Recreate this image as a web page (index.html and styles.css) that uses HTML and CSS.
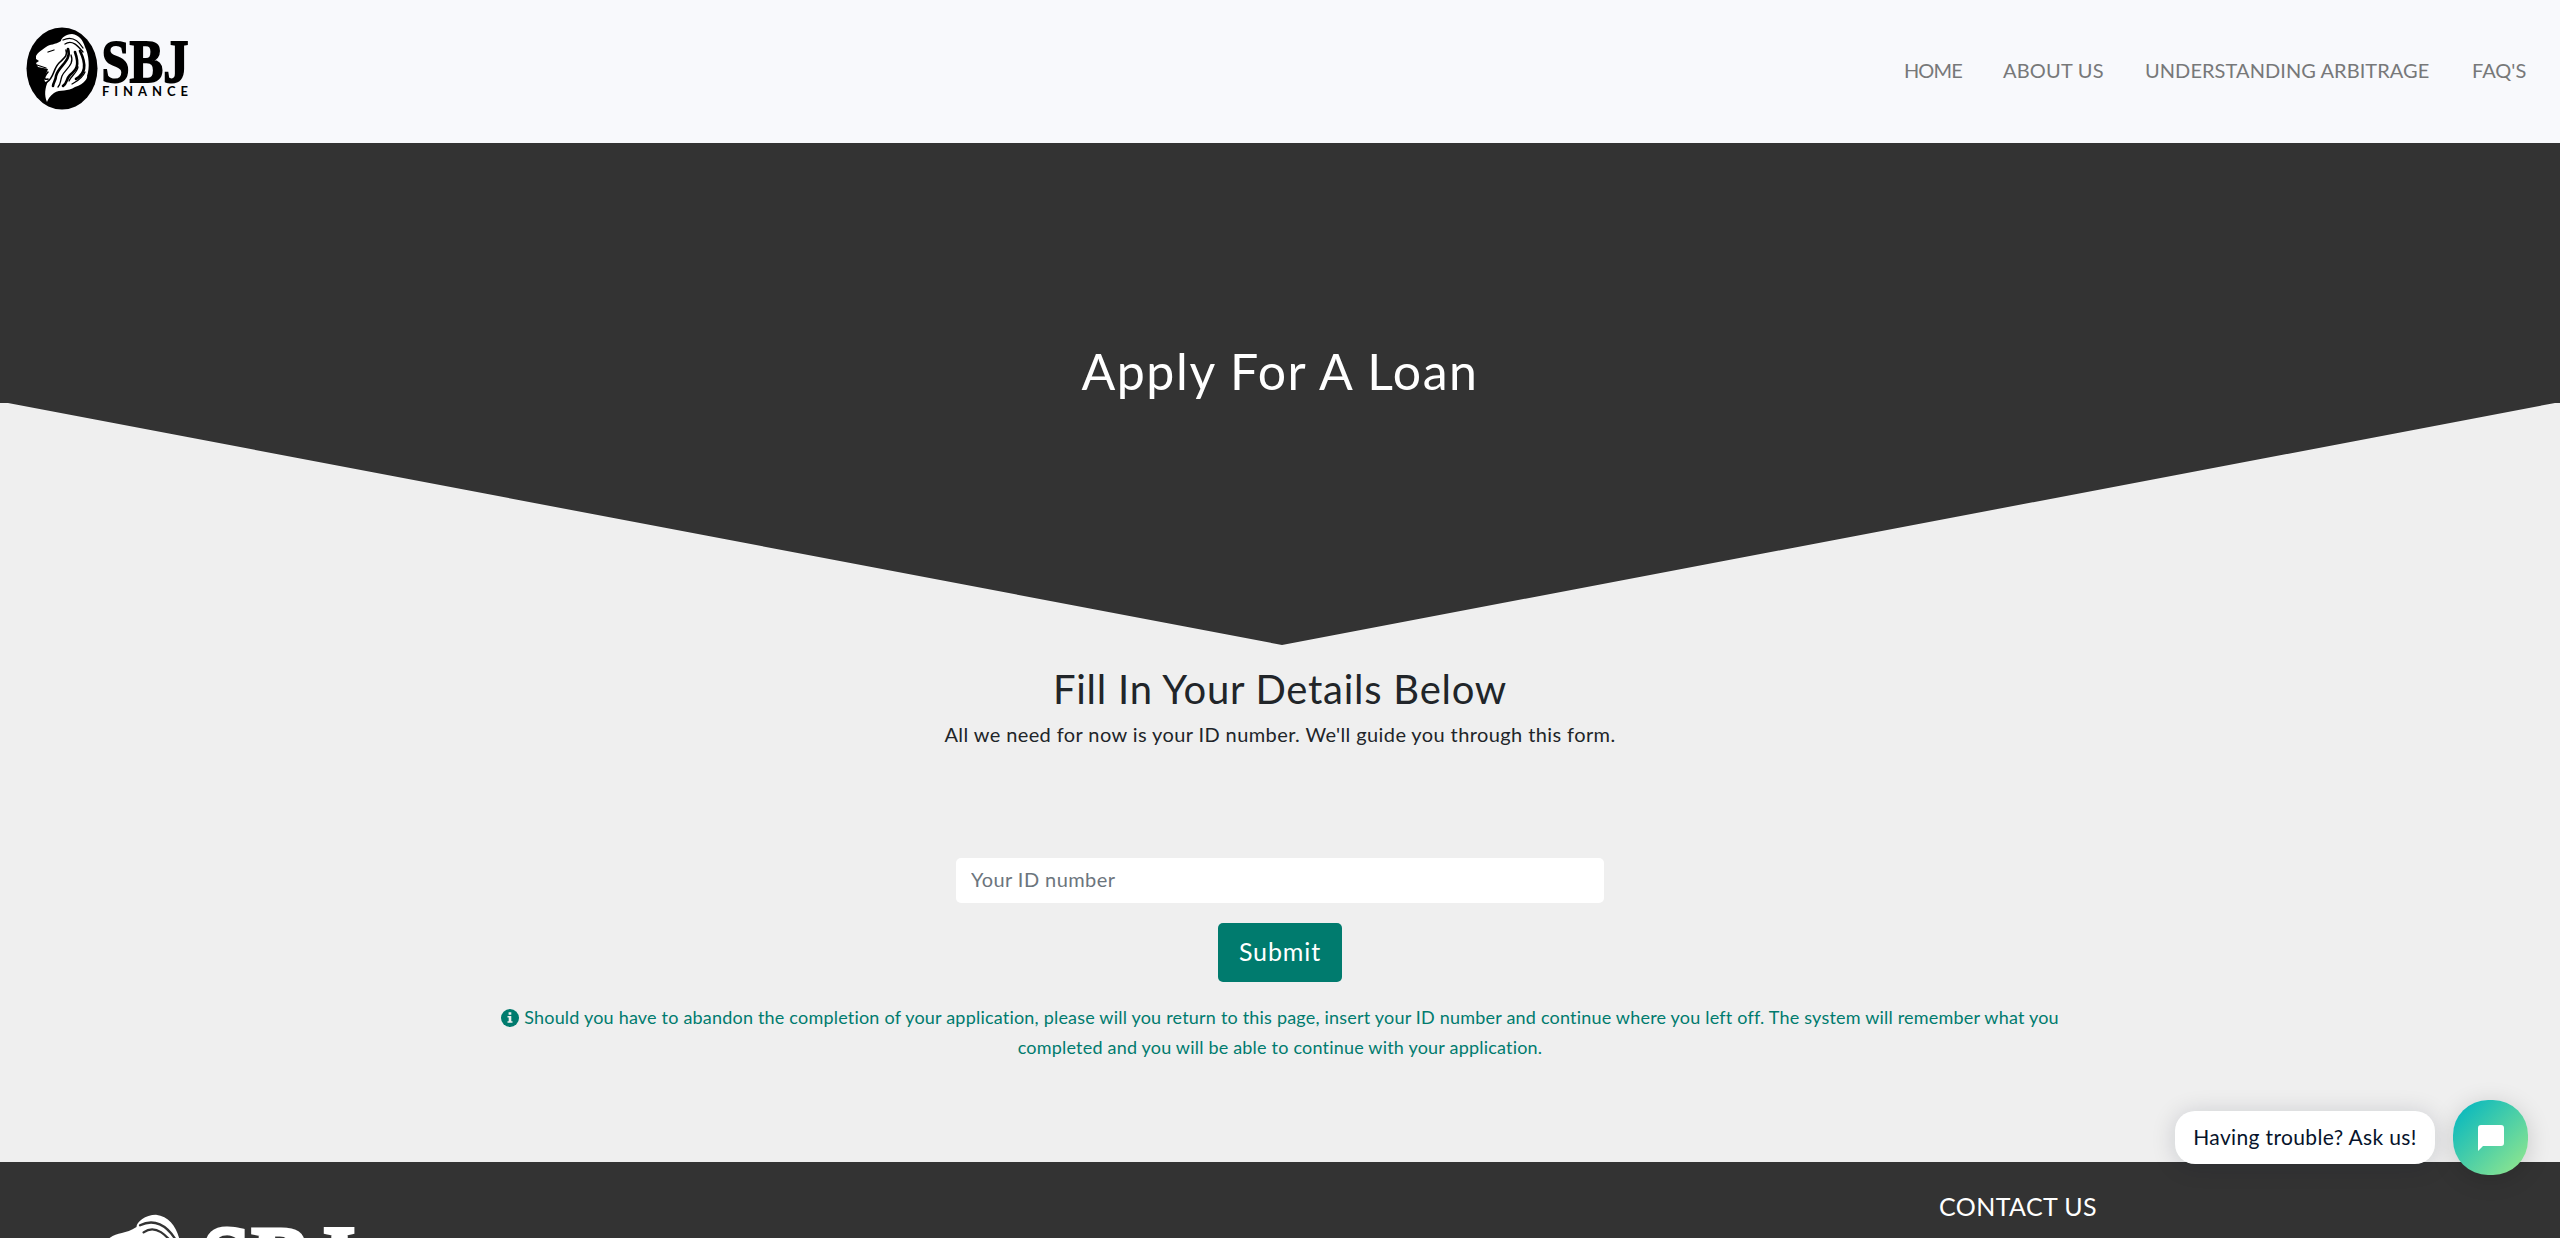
FILE: index.html
```html
<!DOCTYPE html>
<html lang="en">
<head>
<meta charset="utf-8">
<title>SBJ Finance - Apply For A Loan</title>
<link rel="stylesheet" href="styles.css">
</head>
<body>
<header class="header">
  <svg class="logo" width="166" height="88" viewBox="0 0 166 88" role="img" aria-label="SBJ Finance">
    <ellipse cx="36" cy="41.500" rx="35.500" ry="41" fill="#000"/>
    <g id="lion">
      <path fill="#fff" d="M10 29C12 25 15 24 20 20C24 17 29 18 35 14C35 11 40 7 46 7C53 8 57 13 59 20C63 28 64 41 61 49C62 50 59 57 49 60C42 65 34 62 28 66C24 69 22 72 21 75C18 68 19 61 22 54C19 57 17 53 20 47L22 42L12 40L10 36L13 34L10 32Z"/>
      <g fill="none" stroke="currentColor" stroke-linecap="round">
        <path stroke-width="1.300" d="M37 13C45 9 52 13 57 21M39 17C46 12 52 19 57 25M11 38L20 41M22 25L28 23"/>
        <path stroke-width="1.600" d="M22 45C17 51 18 53 22 52M21 55C28 51 27 42 33 36C38 31 42 29 40 23"/>
        <path stroke-width="2.600" d="M42 22C46 34 32 39 30 49C30 53 27 56 27 59M49 25C54 39 50 43 44 48C40 52 41 57 37 59M54 24C61 38 59 47 50 52"/>
        <path stroke-width="1.300" d="M45 28C49 38 39 42 36 49C34 54 35 57 32 60M59 45C56 52 51 54 46 57M52 40C51 46 45 49 43 54"/>
      </g>
    </g>
    <g id="wordmark">
      <text class="logo-name" x="75.500" y="54.500" textLength="87" lengthAdjust="spacingAndGlyphs">SBJ</text>
      <text class="logo-sub" x="76" y="69" textLength="86">FINANCE</text>
    </g>
  </svg>
  <nav class="nav">
    <a class="nav-home">HOME</a><a class="nav-about">ABOUT US</a><a class="nav-arb">UNDERSTANDING ARBITRAGE</a><a class="nav-faq">FAQ'S</a>
  </nav>
</header>
<section class="hero"><h1>Apply For A Loan</h1></section>
<main class="main">
  <h2>Fill In Your Details Below</h2>
  <p class="lead">All we need for now is your ID number. We'll guide you through this form.</p>
  <form class="form">
    <input class="field" type="text" placeholder="Your ID number" aria-label="Your ID number">
    <button class="submit" type="button">Submit</button>
  </form>
  <p class="note"><svg class="info" viewBox="0 0 18 18"><circle cx="9" cy="9" r="9" fill="#007b6e"/><path fill="#efefef" d="M7.600 3.200h2.700v2.600H7.600zM6.500 7h3.800v5.200h1.200v1.600h-5v-1.600h1.200V8.600H6.500z"/></svg>Should you have to abandon the completion of your application, please will you return to this page, insert your ID number and continue where you left off. The system will remember what you<br>completed and you will be able to continue with your application.</p>
</main>
<footer class="footer">
  <svg class="footer-logo" width="295" height="156" viewBox="0 0 166 88" aria-hidden="true">
    <use href="#lion" x="4" y="-1" class="footer-lion"/><use href="#wordmark"/>
  </svg>
  <h3>CONTACT US</h3>
</footer>
<aside class="chat">
  <div class="bubble"><span>Having trouble? Ask us!</span></div>
  <button class="chat-button" type="button" aria-label="Open chat"><svg width="26" height="26" viewBox="0 0 26 26"><path fill="#fff" d="M3 0H23Q26 0 26 3V18Q26 21 23 21H5L0 26V3Q0 0 3 0Z"/></svg></button>
</aside>
</body>
</html>
```
FILE: styles.css
```css
* { box-sizing: border-box; }
body {
  margin: 0;
  height: 1238px;
  overflow: hidden;
  background: #efefef;
  color: #212529;
  font: 400 20px/30px Lato, sans-serif;
}
h1, h2, h3, p { margin: 0; font-weight: 400; white-space: nowrap; }
.header {
  display: flex;
  justify-content: space-between;
  height: 143px;
  padding: 27px 35px 0 26px;
  background: #f8f9fc;
}
.logo { color: #000; }
.logo-name { font: 700 62px "Liberation Serif", serif; stroke: #000; stroke-width: 1.8px; }
.logo-sub { font: 700 13px Lato, sans-serif; }
.nav { display: flex; gap: 41px; padding-top: 28px; color: #777879; white-space: nowrap; }
.nav-home { width: 58px; letter-spacing: -.9px; }
.nav-about { width: 101px; letter-spacing: .2px; }
.nav-arb { width: 286px; letter-spacing: .07px; }
.nav-faq { width: 53px; letter-spacing: 0; }
.hero {
  height: 502px;
  padding-top: 198px;
  text-align: center;
  color: #fff;
  background: #333;
  clip-path: polygon(0 0, 100% 0, 100% 260px, 2555px 260px, 1282px 100%, 8px 260px, 0 260px);
}
h1 { font-size: 50px; line-height: 60px; letter-spacing: 1.6px; }
.main { height: 517px; display: flex; flex-direction: column; align-items: center; }
h2 { margin-top: 20px; font-size: 40px; line-height: 48px; letter-spacing: .75px; }
.lead { margin-top: 6px; letter-spacing: .4px; }
.form { margin-top: 109px; display: flex; flex-direction: column; align-items: center; gap: 20px; }
.field {
  width: 648px;
  height: 45px;
  padding: 0 15px 3px;
  border: 0;
  border-radius: 5px;
  background: #fff;
  font: inherit;
  letter-spacing: .42px;
}
.field::placeholder { color: #6c757d; opacity: 1; }
.submit {
  width: 124px;
  height: 59px;
  padding: 0 0 2px;
  border: 0;
  border-radius: 5px;
  background: #007b6e;
  color: #fff;
  font: 400 25px/57px Lato, sans-serif;
  letter-spacing: .9px;
}
.note { margin-top: 20px; color: #007b6e; font-size: 18px; text-align: center; letter-spacing: .2px; }
.info { width: 18px; height: 18px; margin-right: 5px; vertical-align: -3px; }
.footer { display: flex; justify-content: space-between; height: 76px; padding: 0 463px 0 67px; background: #333; color: #fff; overflow: hidden; }
.footer-logo { flex: none; margin-top: 42px; fill: #fff; }
.footer-logo use { stroke: #fff; }
.footer-lion { color: #333; stroke: none; }
#wordmark .logo-name { stroke: inherit; }
.logo #wordmark { stroke: inherit; }
#wordmark .logo-sub { stroke: none; }
.logo { stroke: #000; }
.logo ellipse, #lion > path { stroke: none; }
h3 { width: 158px; margin-top: 29px; font-size: 25px; line-height: 30px; letter-spacing: .4px; }
.chat { position: absolute; top: 1100px; right: 32px; display: flex; align-items: center; gap: 18px; }
.bubble {
  width: 260px;
  height: 53px;
  margin-top: -1px;
  border-radius: 20px;
  background: #fff;
  color: #06132b;
  font-size: 21px;
  line-height: 52px;
  letter-spacing: .35px;
  text-align: center;
  white-space: nowrap;
  box-shadow: 0 2px 24px rgba(0, 18, 46, .16);
}
.chat-button {
  display: grid;
  place-items: center;
  width: 75px;
  height: 75px;
  padding: 0;
  border: 0;
  border-radius: 35px;
  background: linear-gradient(135deg, #08b8bf 8%, #8de58f 92%);
  box-shadow: 0 4px 24px rgba(0, 0, 0, .16);
}
```
